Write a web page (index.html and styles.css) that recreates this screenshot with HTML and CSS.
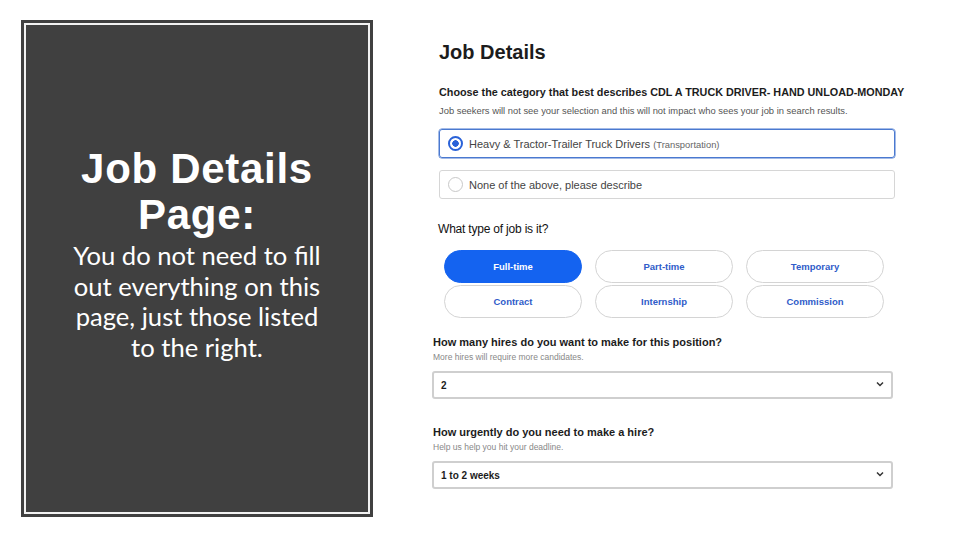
FILE: index.html
```html
<!DOCTYPE html>
<html>
<head>
<meta charset="utf-8">
<link rel="stylesheet" href="styles.css">
</head>
<body>
<div class="page">
  <aside class="panel">
    <div class="panel-inner">
      <h2 class="panel-title">Job Details<br>Page:</h2>
      <p class="panel-text">You do not need to fill out everything on this page, just those listed to the right.</p>
    </div>
  </aside>
  <main class="form">
    <h1 class="form-title">Job Details</h1>
    <div class="q q-category">Choose the category that best describes CDL A TRUCK DRIVER- HAND UNLOAD-MONDAY</div>
    <div class="hint hint-category">Job seekers will not see your selection and this will not impact who sees your job in search results.</div>
    <div class="option option-selected">
      <span class="radio radio-on"></span>
      <span class="option-label">Heavy &amp; Tractor-Trailer Truck Drivers</span>
      <span class="option-sub">(Transportation)</span>
    </div>
    <div class="option option-second">
      <span class="radio"></span>
      <span class="option-label">None of the above, please describe</span>
    </div>
    <div class="q q-type">What type of job is it?</div>
    <div class="pills">
      <div class="pill pill-on">Full-time</div>
      <div class="pill">Part-time</div>
      <div class="pill">Temporary</div>
      <div class="pill">Contract</div>
      <div class="pill">Internship</div>
      <div class="pill">Commission</div>
    </div>
    <div class="q q-hires">How many hires do you want to make for this position?</div>
    <div class="hint hint-small">More hires will require more candidates.</div>
    <div class="select">
      <span class="select-value">2</span>
      <svg class="chev" width="8" height="6" viewBox="0 0 8 6"><polyline points="1,1.5 4,4.5 7,1.5" fill="none" stroke="#333" stroke-width="1.5"/></svg>
    </div>
    <div class="q q-urgent">How urgently do you need to make a hire?</div>
    <div class="hint hint-small">Help us help you hit your deadline.</div>
    <div class="select">
      <span class="select-value">1 to 2 weeks</span>
      <svg class="chev" width="8" height="6" viewBox="0 0 8 6"><polyline points="1,1.5 4,4.5 7,1.5" fill="none" stroke="#333" stroke-width="1.5"/></svg>
    </div>
  </main>
</div>
</body>
</html>
```
FILE: styles.css
```css
* { box-sizing: border-box; }
html, body { margin: 0; padding: 0; background: #fff; }
body { width: 960px; height: 540px; overflow: hidden; }
.page { display: flex; align-items: flex-start; }

.panel {
  margin: 20px 0 0 21px;
  width: 352px;
  height: 497px;
  background: #404040;
  padding: 3px;
}
.panel-inner {
  height: 100%;
  border: 2px solid #f2f2f2;
  display: flex;
  flex-direction: column;
  align-items: center;
  padding-top: 121px;
  color: #fff;
  text-align: center;
}
.panel-title {
  margin: 0;
  font-family: "Liberation Sans", Arial, sans-serif;
  font-weight: bold;
  font-size: 42px;
  line-height: 46px;
  letter-spacing: 0.7px;
}
.panel-text {
  margin: 2px 0 0;
  width: 256px;
  font-family: Lato, "Open Sans", sans-serif;
  font-size: 25.6px;
  line-height: 30.5px;
}

.form {
  margin-left: 59px;
  padding-top: 40px;
  width: 480px;
  font-family: "Liberation Sans", Arial, sans-serif;
  color: #1c1c1c;
}
.form-title {
  margin: 0 0 0 7px;
  font-size: 20px;
  line-height: 24px;
  font-weight: bold;
}
.q {
  font-size: 11px;
  line-height: 14px;
  font-weight: bold;
  white-space: nowrap;
}
.q-category { margin: 21px 0 0 7px; font-size: 10.8px; }
.q-type { margin: 23px 0 0 6px; font-weight: normal; font-size: 12px; color: #111; letter-spacing: -0.2px; }
.q-hires { margin: 17px 0 0 1px; }
.q-urgent { margin: 26px 0 0 1px; }
.hint {
  font-size: 8.5px;
  line-height: 12px;
  color: #555;
  white-space: nowrap;
}
.hint-category { margin: 6px 0 0 7px; font-size: 9.4px; }
.hint-small { margin: 2px 0 0 1px; color: #888; }

.option {
  margin: 12px 0 0 7px;
  width: 456px;
  height: 29px;
  border: 1px solid #d6d6d6;
  border-radius: 3px;
  display: flex;
  align-items: center;
  padding-left: 8px;
  font-size: 11px;
  color: #444;
}
.option-selected { border-color: #4a79d0; box-shadow: 0 0 0 0.5px #4a79d0; }
.radio {
  width: 15px;
  height: 15px;
  border: 1.5px solid #c8c8c8;
  border-radius: 50%;
  margin-right: 6px;
  flex: none;
}
.radio-on {
  border: 2px solid #2a62d8;
  background: radial-gradient(circle, #2a62d8 0 3px, #fff 3.5px);
}
.option-sub { font-size: 9.4px; color: #666; margin-left: 3px; margin-top: 2px; }

.pills {
  margin: 14px 0 0 12px;
  display: grid;
  grid-template-columns: repeat(3, 138px);
  grid-auto-rows: 33px;
  column-gap: 13px;
  row-gap: 2px;
}
.pill {
  border: 1.5px solid #d4d4d4;
  border-radius: 17px;
  display: flex;
  align-items: center;
  justify-content: center;
  font-size: 9.5px;
  font-weight: bold;
  color: #2f5cc9;
}
.pill-on { background: #1463f0; border-color: #1463f0; color: #fff; }

.select {
  margin-top: 8px;
  width: 461px;
  height: 28px;
  border: 2px solid #cfcfcf;
  border-radius: 3px;
  display: flex;
  align-items: center;
  justify-content: space-between;
  padding: 0 7px 0 7px;
}
.select-value { font-size: 10px; font-weight: bold; color: #1c1c1c; }
.chev { margin-top: -2px; }
```
